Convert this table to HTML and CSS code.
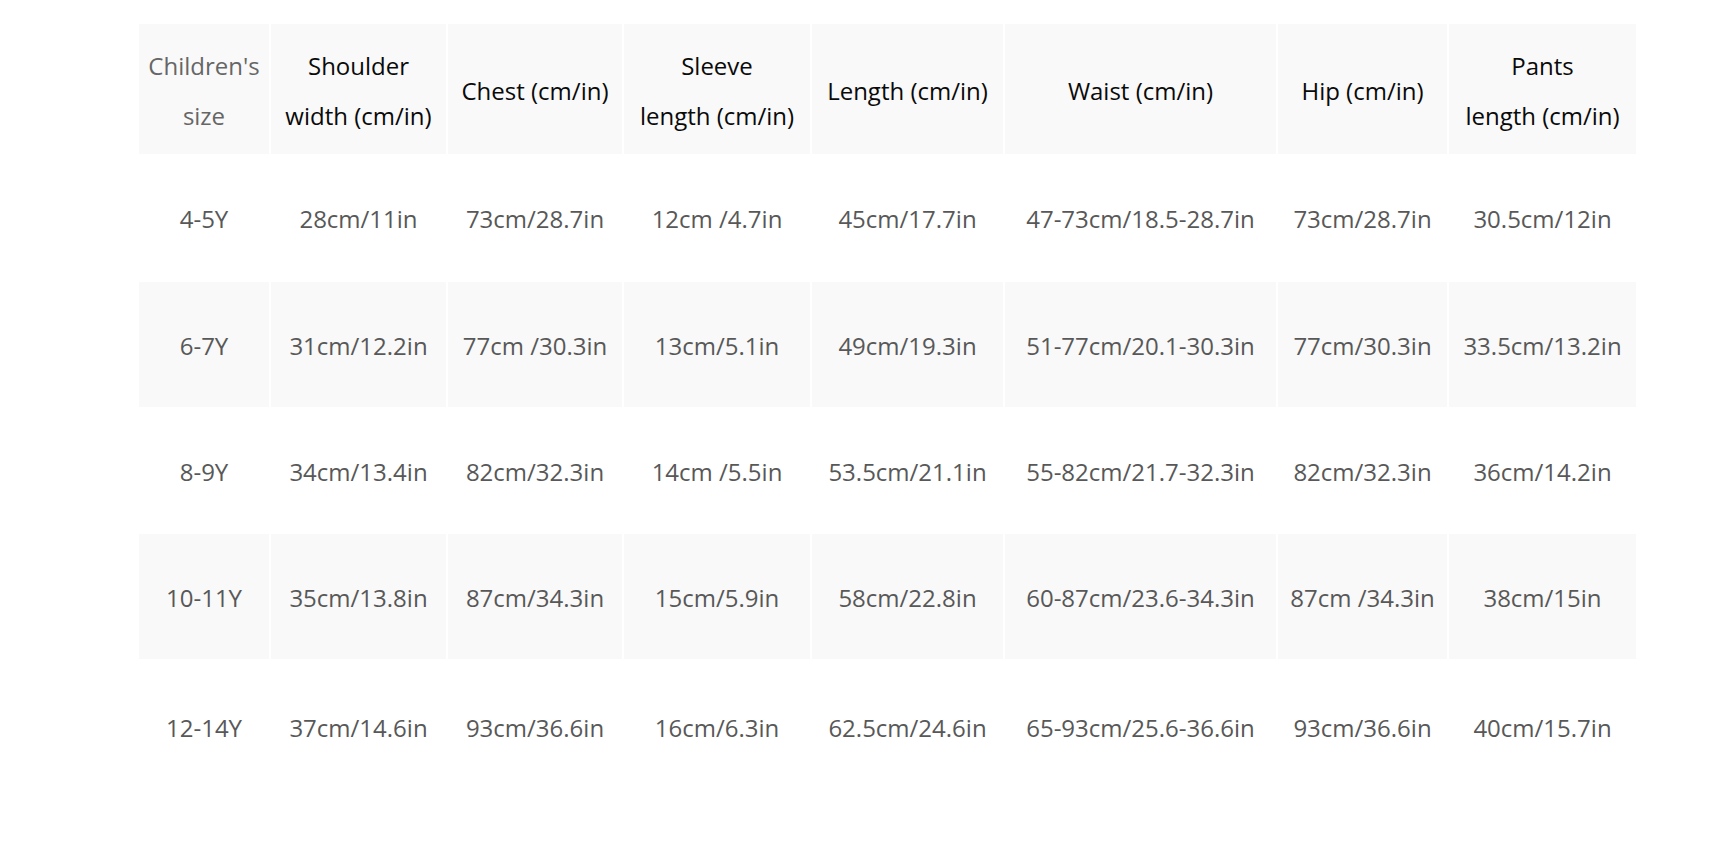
FILE: index.html
```html
<!DOCTYPE html>
<html>
<head>
<meta charset="utf-8">
<link rel="stylesheet" href="styles.css">
</head>
<body>
<div class="wrap">
<table class="size-table">
  <colgroup>
    <col class="c1"><col class="c2"><col class="c3"><col class="c4"><col class="c5"><col class="c6"><col class="c7"><col class="c8">
  </colgroup>
  <thead>
    <tr class="head">
      <th class="muted">Children's<br>size</th>
      <th>Shoulder<br>width (cm/in)</th>
      <th>Chest (cm/in)</th>
      <th>Sleeve<br>length (cm/in)</th>
      <th>Length (cm/in)</th>
      <th>Waist (cm/in)</th>
      <th>Hip (cm/in)</th>
      <th>Pants<br>length (cm/in)</th>
    </tr>
  </thead>
  <tbody>
    <tr class="r1">
      <td>4-5Y</td><td>28cm/11in</td><td>73cm/28.7in</td><td>12cm /4.7in</td><td>45cm/17.7in</td><td>47-73cm/18.5-28.7in</td><td>73cm/28.7in</td><td>30.5cm/12in</td>
    </tr>
    <tr class="r2 shade">
      <td>6-7Y</td><td>31cm/12.2in</td><td>77cm /30.3in</td><td>13cm/5.1in</td><td>49cm/19.3in</td><td>51-77cm/20.1-30.3in</td><td>77cm/30.3in</td><td>33.5cm/13.2in</td>
    </tr>
    <tr class="r3">
      <td>8-9Y</td><td>34cm/13.4in</td><td>82cm/32.3in</td><td>14cm /5.5in</td><td>53.5cm/21.1in</td><td>55-82cm/21.7-32.3in</td><td>82cm/32.3in</td><td>36cm/14.2in</td>
    </tr>
    <tr class="r4 shade">
      <td>10-11Y</td><td>35cm/13.8in</td><td>87cm/34.3in</td><td>15cm/5.9in</td><td>58cm/22.8in</td><td>60-87cm/23.6-34.3in</td><td>87cm /34.3in</td><td>38cm/15in</td>
    </tr>
    <tr class="r5">
      <td>12-14Y</td><td>37cm/14.6in</td><td>93cm/36.6in</td><td>16cm/6.3in</td><td>62.5cm/24.6in</td><td>65-93cm/25.6-36.6in</td><td>93cm/36.6in</td><td>40cm/15.7in</td>
    </tr>
  </tbody>
</table>
</div>
</body>
</html>
```
FILE: styles.css
```css
html, body {
  margin: 0;
  padding: 0;
  background: #ffffff;
}
body {
  font-family: "Open Sans", "Noto Sans", "Liberation Sans", sans-serif;
}
.wrap {
  padding: 22px 0 0 137px;
}
.size-table {
  table-layout: fixed;
  border-collapse: separate;
  border-spacing: 2px;
  width: 1501px;
}
.c1 { width: 130px; }
.c2 { width: 175px; }
.c3 { width: 174px; }
.c4 { width: 186px; }
.c5 { width: 191px; }
.c6 { width: 271px; }
.c7 { width: 169px; }
.c8 { width: 187px; }
.size-table th,
.size-table td {
  padding: 2px 0 0;
  text-align: center;
  vertical-align: middle;
  font-size: 24px;
  letter-spacing: 0;
  white-space: nowrap;
  box-sizing: border-box;
}
.size-table th {
  font-weight: normal;
  color: #0a0a0a;
  background: #f9f9f9;
  line-height: 50px;
  height: 130px;
  padding-top: 4px;
}
.size-table th.muted {
  color: #666666;
}
.size-table td {
  color: #585858;
  line-height: 30px;
}
.r1 td { height: 124px; }
.r2 td { height: 125px; }
.r3 td { height: 123px; }
.r4 td { height: 125px; }
.r5 td { height: 134px; padding-top: 0; }
.shade td {
  background: #f9f9f9;
}
```
